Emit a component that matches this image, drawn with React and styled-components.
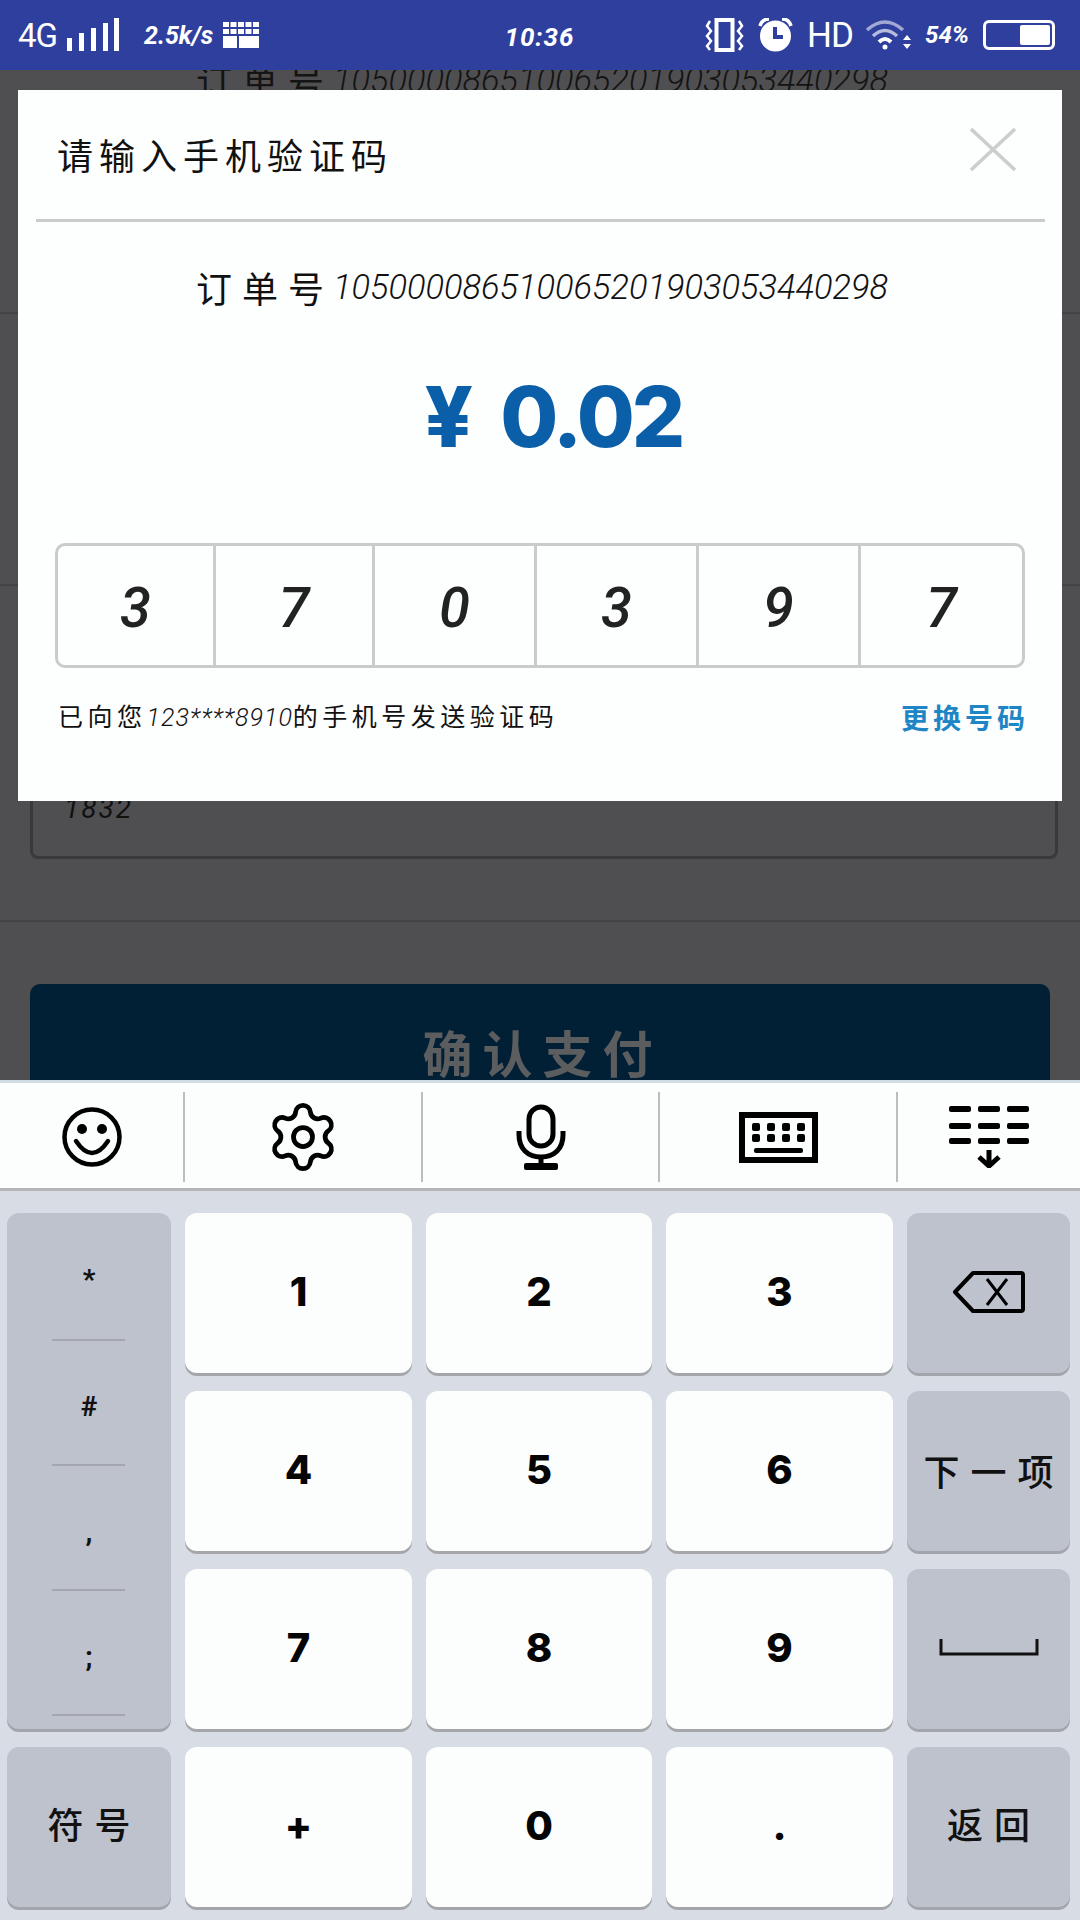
import React from "react";
import styled, { createGlobalStyle } from "styled-components";
import { Settings } from "lucide-react";

const CJK = `"Noto Sans CJK SC", sans-serif`;
const LATIN = `Roboto, "Noto Sans CJK SC", sans-serif`;

const GlobalStyle = createGlobalStyle`
  * { box-sizing: border-box; }
  html, body { margin: 0; padding: 0; background: #4f4f51; }
  body { font-family: ${CJK}; }
`;

const Page = styled.div`
  width: 1080px;
  height: 1920px;
  display: flex;
  flex-direction: column;
  overflow: hidden;
`;

/* status bar */
const StatusBar = styled.div`
  height: 70px;
  flex: none;
  background: #2f3f9e;
  color: #fff;
  display: grid;
  grid-template-columns: 1fr auto 1fr;
  align-items: center;
  padding: 0 25px 0 18px;
`;

const StatusGroup = styled.div`
  display: flex;
  align-items: center;
  justify-content: ${(props) => (props.$end ? "flex-end" : "flex-start")};
  gap: ${(props) => props.$gap || 10}px;
`;

const NetLabel = styled.span`
  font: 400 33px ${LATIN};
  letter-spacing: -1px;
  width: 38px;
`;

const Speed = styled.span`
  font: italic 700 25px ${LATIN};
  margin-left: 14px;
`;

const Clock = styled.span`
  font: italic 700 26px ${LATIN};
  letter-spacing: 1px;
  padding: 4px 0 0 6px;
`;

const Hd = styled.span`
  font: 400 35px ${LATIN};
  letter-spacing: -1px;
  width: 44px;
`;

const Percent = styled.span`
  font: italic 700 24px ${LATIN};
  margin-left: -2px;
`;

const Battery = styled.div`
  width: 72px;
  height: 30px;
  border: 3px solid #fff;
  border-radius: 6px;
  padding: 2px;
  display: flex;
  justify-content: flex-end;
`;

const BatteryFill = styled.div`
  width: 30px;
  background: #fff;
  border-radius: 2px;
`;

/* dimmed page under the dialog */
const Backdrop = styled.div`
  position: relative;
  height: 1010px;
  flex: none;
  overflow: hidden;
  background: #4f4f51;
`;

const BehindOrder = styled.div`
  height: 20px;
  overflow: hidden;
  display: flex;
  justify-content: center;
  align-items: center;
  padding-left: 4px;
  color: #141414;
`;

const BehindRow = styled.div`
  height: ${(props) => props.$height}px;
  border-bottom: 2px solid #444446;
`;

const InputRow = styled.div`
  height: 336px;
  padding: 114px 22px 0 30px;
  border-bottom: 2px solid #444446;
`;

const InputBox = styled.div`
  height: 159px;
  border: 3px solid #39393b;
  border-radius: 8px;
  padding: 90px 0 0 31px;
  font: italic 400 28px/32px ${LATIN};
  letter-spacing: 2px;
  color: #111;
`;

const PayButton = styled.div`
  margin: 62px 30px 0;
  height: 130px;
  background: #011f35;
  border-radius: 10px;
  display: flex;
  justify-content: center;
  padding: 37px 0 0 5px;
  color: #5b5d5f;
  font: 700 50px/60px ${CJK};
  letter-spacing: 10px;
`;

/* dialog */
const Dialog = styled.div`
  position: absolute;
  left: 18px;
  top: 20px;
  width: 1044px;
  height: 711px;
  background: #fdfefe;
  display: flex;
  flex-direction: column;
  color: #111;
`;

const DialogHeader = styled.div`
  height: 132px;
  margin: 0 17px 0 18px;
  border-bottom: 3px solid #cbcbcd;
  display: flex;
  justify-content: space-between;
  padding: 35px 29px 0 21px;
`;

const DialogTitle = styled.div`
  font: 400 36px/58px ${CJK};
  letter-spacing: 6px;
`;

const CloseWrap = styled.div`
  padding-top: 3px;
`;

const OrderLine = styled.div`
  display: flex;
  align-items: center;
  justify-content: center;
  font: 400 36px/52px ${CJK};
  letter-spacing: 10px;
  white-space: nowrap;
`;

const OrderDigits = styled.span`
  font: italic 300 34.4px/52px ${LATIN};
  letter-spacing: 0;
  margin-left: -1px;
`;

const OrderWrap = styled.div`
  margin-top: 39px;
  padding-left: 4px;
`;

const Amount = styled.div`
  margin-top: 59px;
  height: 90px;
  display: flex;
  align-items: center;
  justify-content: center;
  gap: 30px;
  padding-left: 27px;
  color: #0b5fa8;
  font: 800 84px/90px Inter, sans-serif;
  letter-spacing: -3px;
`;

const CodeBox = styled.div`
  margin: 81px 37px 0;
  height: 125px;
  border: 3px solid #cbcbcd;
  border-radius: 10px;
  display: grid;
  grid-template-columns: 155px 159px 162px 162px 162px 1fr;
`;

const CodeCell = styled.div`
  display: flex;
  align-items: center;
  justify-content: center;
  padding-top: 4px;
  border-left: ${(props) => (props.$first ? "none" : "3px solid #cbcbcd")};
  font: italic 500 56px ${LATIN};
  color: #222;
`;

const HintRow = styled.div`
  margin: 25px 37px 0 40px;
  display: flex;
  justify-content: space-between;
  align-items: center;
`;

const Hint = styled.div`
  font: 400 25px/44px ${CJK};
  letter-spacing: 4.5px;
  white-space: nowrap;
`;

const HintDigits = styled.span`
  font: italic 300 25px/44px ${LATIN};
  letter-spacing: 1px;
`;

const ChangeLink = styled.div`
  font: 700 28px/44px ${CJK};
  letter-spacing: 4px;
  margin-right: -4px;
  color: #1f86c6;
`;

/* keyboard */
const Keyboard = styled.div`
  flex: 1;
  background: #d8dce4;
`;

const Toolbar = styled.div`
  height: 111px;
  background: #fcfdfd;
  border-top: 3px solid #d0dde3;
  border-bottom: 3px solid #b4b5b7;
  padding-top: 3px;
  display: grid;
  grid-template-columns: 183px 238px 237px 238px 184px;
  align-items: center;
`;

const ToolCell = styled.div`
  height: 90px;
  display: flex;
  align-items: center;
  justify-content: center;
  color: #000;
  border-left: ${(props) => (props.$first ? "none" : "2px solid #bdbdbd")};
`;

const Keys = styled.div`
  display: grid;
  grid-template-columns: 164px 227px 226px 227px 163px;
  grid-auto-rows: 160px;
  gap: 18px 14px;
  padding: 22px 11px 0 7px;
`;

const Key = styled.div`
  border-radius: 12px;
  display: flex;
  align-items: center;
  justify-content: center;
  padding-bottom: 3px;
  color: #050505;
  background: ${(props) => (props.$gray ? "#bec2cc" : "#fcfefe")};
  box-shadow: 0 3px 0 ${(props) => (props.$gray ? "#a2a5ac" : "#a4a6aa")};
  font: 800 40px Inter, sans-serif;
`;

const SideLabel = styled.span`
  font: 500 36px ${CJK};
  letter-spacing: 11px;
  margin-right: -11px;
  padding-bottom: ${(props) => (props.$lift ? 6 : 0)}px;
  color: #111;
`;

const SymbolKey = styled.div`
  grid-row: span 3;
  border-radius: 12px;
  background: #bec2cc;
  box-shadow: 0 3px 0 #a2a5ac;
  padding-bottom: 13px;
  display: grid;
  grid-template-rows: 128px repeat(3, 125px);
`;

const SymbolCell = styled.div`
  position: relative;
  display: flex;
  align-items: center;
  justify-content: center;
  padding-top: 5px;
  font: 700 28px ${LATIN};
  color: #111;

  &::after {
    content: "";
    position: absolute;
    left: 45px;
    right: 46px;
    bottom: 0;
    height: 2px;
    background: #a3a6ae;
  }
`;

const Signal = () => (
  <svg width="54" height="34" viewBox="0 0 54 34" fill="#fff">
    <rect x="1" y="20" width="5" height="13" />
    <rect x="13" y="15" width="5" height="18" />
    <rect x="25" y="10" width="5" height="23" />
    <rect x="37" y="5" width="5" height="28" />
    <rect x="48" y="0" width="5" height="33" />
  </svg>
);

const GridIcon = () => (
  <svg width="36" height="26" viewBox="0 0 36 26" fill="#fff">
    {[0, 7.5, 15, 22.5, 30].map((x) => (
      <React.Fragment key={x}>
        <rect x={x} y="0" width="6" height="5" />
        <rect x={x} y="7" width="6" height="5" />
      </React.Fragment>
    ))}
    <rect x="0" y="14" width="14" height="12" />
    <rect x="16" y="14" width="20" height="12" />
  </svg>
);

const VibrateIcon = () => (
  <svg width="39" height="34" viewBox="0 0 39 34" fill="none" stroke="#fff">
    <rect x="11.5" y="2" width="16" height="30" strokeWidth="4" />
    <path d="M5 3 L2 8 L6 13 L2 18 L6 23 L2 28 L5 32" strokeWidth="2.5" />
    <path d="M34 3 L37 8 L33 13 L37 18 L33 23 L37 28 L34 32" strokeWidth="2.5" />
  </svg>
);

const AlarmIcon = () => (
  <svg width="35" height="34" viewBox="0 0 35 34">
    <circle cx="17.5" cy="18" r="15.5" fill="#fff" />
    <path d="M2 8 Q4 1 11 1 M33 8 Q31 1 24 1" stroke="#fff" strokeWidth="3.5" fill="none" />
    <path d="M17 9 V19 H25" stroke="#2f3f9e" strokeWidth="4" fill="none" />
  </svg>
);

const WifiIcon = () => (
  <svg width="48" height="32" viewBox="0 0 48 32" fill="none" stroke="#fff">
    <path d="M2 11 Q20 -5 38 11" strokeWidth="3.5" opacity="0.55" />
    <path d="M8 17 Q20 6 32 17" strokeWidth="3.5" opacity="0.65" />
    <path d="M14 23 Q20 17 26 23" strokeWidth="4" />
    <circle cx="20" cy="28" r="2.5" fill="#fff" stroke="none" />
    <path d="M38 21 L42 16 L46 21 Z M38 25 L46 25 L42 30 Z" fill="#fff" stroke="none" />
  </svg>
);

const SmileIcon = () => (
  <svg width="60" height="60" viewBox="0 0 60 60" fill="none" stroke="#000" strokeWidth="4.5">
    <circle cx="30" cy="30" r="27.5" />
    <circle cx="20" cy="22" r="5" fill="#000" stroke="none" />
    <circle cx="40" cy="22" r="5" fill="#000" stroke="none" />
    <path d="M14 34 Q30 58 46 34" strokeLinecap="round" />
  </svg>
);

const MicIcon = () => (
  <svg width="50" height="66" viewBox="0 0 50 66" fill="none" stroke="#000" strokeWidth="5">
    <rect x="13" y="3" width="24" height="39" rx="12" />
    <path d="M3 27 V31 C3 45 12 53 25 53 C38 53 47 45 47 31 V27" />
    <path d="M25 53 V62" />
    <rect x="8" y="59" width="34" height="7" rx="2" fill="#000" stroke="none" />
  </svg>
);

const KeyboardIcon = () => (
  <svg width="79" height="51" viewBox="0 0 79 51">
    <rect x="3" y="3" width="73" height="45" fill="none" stroke="#000" strokeWidth="6" />
    {[13, 28, 43, 58].map((x) => (
      <React.Fragment key={x}>
        <rect x={x} y="11" width="8" height="8" rx="2" />
        <rect x={x} y="22" width="8" height="8" rx="2" />
      </React.Fragment>
    ))}
    <rect x="15" y="36" width="49" height="5" rx="2" />
  </svg>
);

const CollapseIcon = () => (
  <svg width="80" height="62" viewBox="0 0 80 62">
    {[0, 17, 32].map((y) => (
      <React.Fragment key={y}>
        <rect x="0" y={y} width="22" height="6" rx="2" />
        <rect x="29" y={y} width="22" height="6" rx="2" />
        <rect x="58" y={y} width="22" height="6" rx="2" />
      </React.Fragment>
    ))}
    <path d="M40 44 V60 M30 51 L40 60 L50 51" stroke="#000" strokeWidth="5" fill="none" />
  </svg>
);

const BackspaceIcon = () => (
  <svg width="72" height="42" viewBox="0 0 72 42" fill="none" stroke="#000" strokeWidth="4">
    <path d="M20 2 H68 Q70 2 70 4 V38 Q70 40 68 40 H20 L2 21 Z" strokeLinejoin="round" />
    <path d="M34 8 L54 34 M54 8 L34 34" strokeWidth="3" />
  </svg>
);

const SpaceIcon = () => (
  <svg width="100" height="18" viewBox="0 0 100 18" fill="none" stroke="#111" strokeWidth="3">
    <path d="M2 0 V15 H98 V0" />
  </svg>
);

const CloseIcon = () => (
  <svg width="46" height="43" viewBox="0 0 46 43" stroke="#cdcdcf" strokeWidth="3.5">
    <path d="M1 1 L45 42 M45 1 L1 42" />
  </svg>
);

const Order = () => (
  <OrderLine>
    订单号<OrderDigits>105000086510065201903053440298</OrderDigits>
  </OrderLine>
);

const code = ["3", "7", "0", "3", "9", "7"];
const digitRows = [
  ["1", "2", "3"],
  ["4", "5", "6"],
  ["7", "8", "9"],
];

export default function App() {
  return (
    <Page>
      <GlobalStyle />
      <StatusBar>
        <StatusGroup>
          <NetLabel>4G</NetLabel>
          <Signal />
          <Speed>2.5k/s</Speed>
          <GridIcon />
        </StatusGroup>
        <Clock>10:36</Clock>
        <StatusGroup $end $gap={14}>
          <VibrateIcon />
          <AlarmIcon />
          <Hd>HD</Hd>
          <WifiIcon />
          <Percent>54%</Percent>
          <Battery>
            <BatteryFill />
          </Battery>
        </StatusGroup>
      </StatusBar>

      <Backdrop>
        <BehindOrder>
          <Order />
        </BehindOrder>
        <BehindRow $height={224} />
        <BehindRow $height={272} />
        <InputRow>
          <InputBox>1832</InputBox>
        </InputRow>
        <PayButton>确认支付</PayButton>

        <Dialog>
          <DialogHeader>
            <DialogTitle>请输入手机验证码</DialogTitle>
            <CloseWrap>
              <CloseIcon />
            </CloseWrap>
          </DialogHeader>
          <OrderWrap>
            <Order />
          </OrderWrap>
          <Amount>
            <span>¥</span>
            <span>0.02</span>
          </Amount>
          <CodeBox>
            {code.map((digit, i) => (
              <CodeCell key={i} $first={i === 0}>
                {digit}
              </CodeCell>
            ))}
          </CodeBox>
          <HintRow>
            <Hint>
              已向您<HintDigits>123****8910</HintDigits>的手机号发送验证码
            </Hint>
            <ChangeLink>更换号码</ChangeLink>
          </HintRow>
        </Dialog>
      </Backdrop>

      <Keyboard>
        <Toolbar>
          <ToolCell $first>
            <SmileIcon />
          </ToolCell>
          <ToolCell>
            <Settings size={76} strokeWidth={1.5} />
          </ToolCell>
          <ToolCell>
            <MicIcon />
          </ToolCell>
          <ToolCell>
            <KeyboardIcon />
          </ToolCell>
          <ToolCell>
            <CollapseIcon />
          </ToolCell>
        </Toolbar>
        <Keys>
          <SymbolKey>
            {["*", "#", ",", ";"].map((s) => (
              <SymbolCell key={s}>{s}</SymbolCell>
            ))}
          </SymbolKey>
          {digitRows[0].map((d) => (
            <Key key={d}>{d}</Key>
          ))}
          <Key $gray>
            <BackspaceIcon />
          </Key>
          {digitRows[1].map((d) => (
            <Key key={d}>{d}</Key>
          ))}
          <Key $gray>
            <SideLabel>下一项</SideLabel>
          </Key>
          {digitRows[2].map((d) => (
            <Key key={d}>{d}</Key>
          ))}
          <Key $gray>
            <SpaceIcon />
          </Key>
          <Key $gray>
            <SideLabel $lift>符号</SideLabel>
          </Key>
          <Key>+</Key>
          <Key>0</Key>
          <Key>.</Key>
          <Key $gray>
            <SideLabel $lift>返回</SideLabel>
          </Key>
        </Keys>
      </Keyboard>
    </Page>
  );
}
